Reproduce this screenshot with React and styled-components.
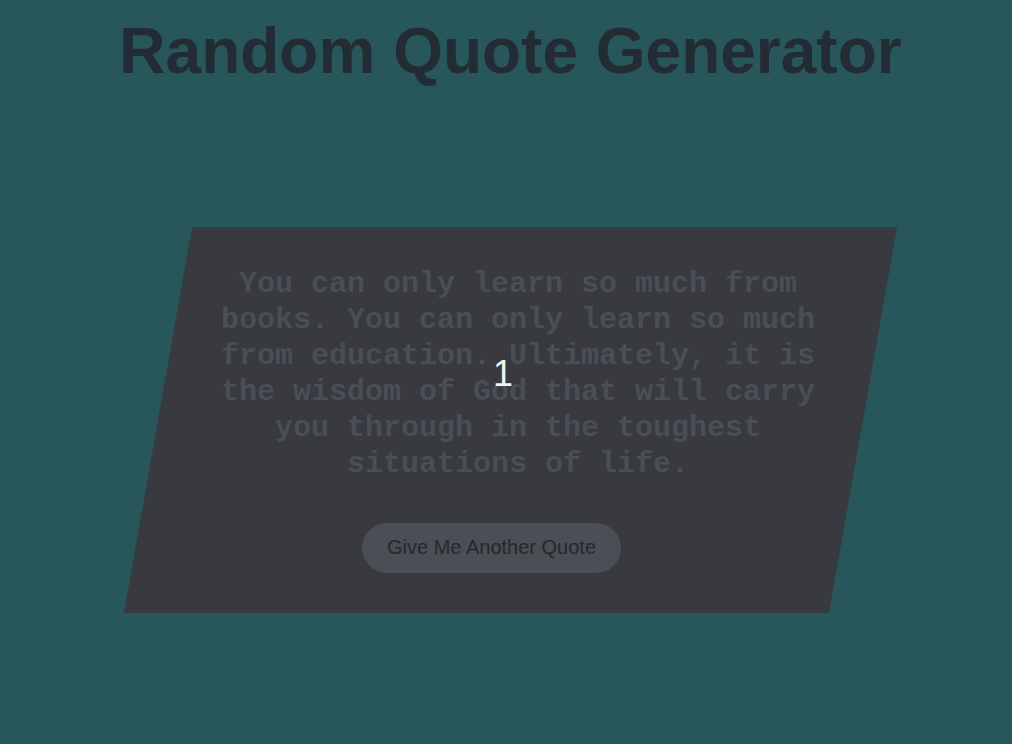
import React from "react";
import styled, { createGlobalStyle } from "styled-components";

const quote =
  "You can only learn so much from books. You can only learn so much from education. Ultimately, it is the wisdom of God that will carry you through in the toughest situations of life.";

function App() {
  return (
    <Page>
      <GlobalStyle />
      <Title>Random Quote Generator</Title>
      <Card>
        <Quote>
          {quote}
          <Counter>1</Counter>
        </Quote>
        <NextButton>Give Me Another Quote</NextButton>
      </Card>
    </Page>
  );
}

const GlobalStyle = createGlobalStyle`
  html, body {
    margin: 0;
    padding: 0;
    background: #27575a;
  }
  body {
    min-height: 744px;
    font-family: "Liberation Sans", Arial, sans-serif;
  }
`;

const Page = styled.div`
  box-sizing: border-box;
  min-height: 744px;
  display: flex;
  flex-direction: column;
  align-items: center;
  padding: 14px 0 0 9px;
`;

const Title = styled.h1`
  margin: 0;
  font-family: "Liberation Sans", Arial, sans-serif;
  font-size: 64px;
  font-weight: bold;
  line-height: normal;
  color: #232c34;
`;

const Card = styled.div`
  position: relative;
  box-sizing: border-box;
  width: 705px;
  margin-top: 139px;
  padding: 39px 0 40px 60px;
  display: flex;
  flex-direction: column;
  align-items: flex-start;

  &::before {
    content: "";
    position: absolute;
    inset: 0;
    background: #383a40;
    transform: skewX(-10deg);
  }
`;

const Quote = styled.p`
  position: relative;
  width: 600px;
  margin: 0;
  font-family: "Liberation Mono", "Courier New", monospace;
  font-size: 30px;
  font-weight: bold;
  line-height: 36px;
  text-align: center;
  color: #4a4e55;
`;

const Counter = styled.span`
  position: absolute;
  left: 285px;
  top: 50%;
  transform: translate(-50%, -50%);
  font-family: "Liberation Sans", Arial, sans-serif;
  font-size: 36px;
  font-weight: normal;
  line-height: 1.15;
  color: #f2f2f2;
`;

const NextButton = styled.button`
  position: relative;
  box-sizing: border-box;
  height: 50px;
  margin: 41px 0 0 144px;
  padding: 0 25px 2px;
  border: none;
  border-radius: 25px;
  background: #4b4e54;
  font-family: "Liberation Sans", Arial, sans-serif;
  font-size: 20px;
  color: #25282e;
  cursor: pointer;
`;

export default App;
